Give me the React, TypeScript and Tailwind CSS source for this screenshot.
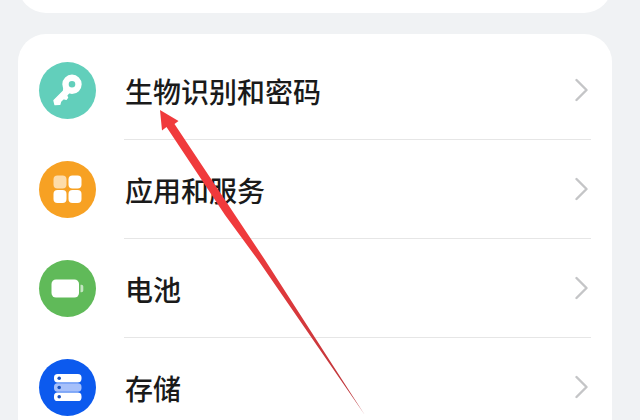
import type { ReactNode } from 'react'

function KeyIcon() {
  return <svg viewBox="0 0 57 57" className="w-full h-full" fill="none" aria-hidden="true">
    <circle cx="33" cy="22.3" r="6.5" stroke="#fff" strokeWidth="6.4" />
    <path d="M25 26L30 30.500L27.500 33.500L28.500 35.500L27.200 37.200L24.500 36.500L21.500 39.500L20.800 42.300L16 42.500L15 38.500L24.500 29Z" fill="#fff" stroke="#fff" strokeWidth="1.4" strokeLinejoin="round" />
  </svg>
}

function AppsIcon() {
  return <svg viewBox="0 0 57 57" className="w-full h-full" fill="#fff" aria-hidden="true">
    <rect x="14.5" y="14.5" width="13" height="13" rx="4" fill="#fddcaa" />
    <rect x="29.5" y="14.5" width="13" height="13" rx="4" />
    <rect x="14.5" y="29" width="13" height="13" rx="4" />
    <rect x="29.5" y="29" width="13" height="13" rx="4" />
  </svg>
}

function BatteryIcon() {
  return <svg viewBox="0 0 57 57" className="w-full h-full" fill="#fff" aria-hidden="true">
    <rect x="12.5" y="19.5" width="27.5" height="18" rx="4.5" />
    <path d="M41.5 24.8h1a1.8 1.8 0 0 1 1.8 1.8v3.8a1.8 1.8 0 0 1-1.8 1.8h-1z" fill="#c5e6c3" />
  </svg>
}

function StorageIcon() {
  return <svg viewBox="0 0 57 57" className="w-full h-full" aria-hidden="true">
    <rect x="15" y="15" width="27.5" height="8.4" rx="3.6" fill="#fff" />
    <rect x="15" y="24.3" width="27.5" height="8.4" rx="3.6" fill="#a6c0fa" />
    <rect x="15" y="33.6" width="27.5" height="8.4" rx="3.6" fill="#fff" />
    <g fill="#174fbd">
      <circle cx="20.2" cy="19.2" r="1.8" />
      <circle cx="20.2" cy="28.5" r="1.8" />
      <circle cx="20.2" cy="37.8" r="1.8" />
    </g>
  </svg>
}

const items: { label: string; color: string; icon: ReactNode }[] = [
  { label: '生物识别和密码', color: 'bg-[#62cfbb]', icon: <KeyIcon /> },
  { label: '应用和服务', color: 'bg-[#f7a123]', icon: <AppsIcon /> },
  { label: '电池', color: 'bg-[#60ba59]', icon: <BatteryIcon /> },
  { label: '存储', color: 'bg-[#0c5aee]', icon: <StorageIcon /> },
]

function SettingsRow({ label, color, icon }: { label: string; color: string; icon: ReactNode }) {
  return <li className="group">
    <button type="button" className="flex w-full h-[99px] items-center gap-7 text-left">
      <span className={`w-[57px] h-[57px] shrink-0 rounded-full ${color}`}>{icon}</span>
      <span className="flex flex-1 h-full items-center justify-between border-b border-[#e6e6e6] group-last:border-transparent">
        <span className="pl-px pt-0.5 text-[28px] leading-10 font-medium text-[#1a1a1a]">{label}</span>
        <svg viewBox="0 0 14 24" className="w-3.5 h-6 mr-0.5" fill="none" stroke="#c4c5c7" strokeWidth="2.4" strokeLinecap="round" strokeLinejoin="round" aria-hidden="true">
          <path d="M1.5 2L11.5 12L1.5 22" />
        </svg>
      </span>
    </button>
  </li>
}

export default function App() {
  return <main className="relative h-screen overflow-hidden bg-[#f0f2f4] pl-[18px] pr-7 font-['Noto_Sans_CJK_SC',sans-serif]">
    <div className="h-[13px] overflow-hidden flex flex-col justify-end">
      <div className="h-14 shrink-0 rounded-[28px] bg-white" />
    </div>
    <ul className="mt-[21px] rounded-[28px] bg-white px-[21px] pt-[7px] pb-2">
      {items.map((item) => <SettingsRow key={item.label} {...item} />)}
    </ul>
    {/* pointer to the first row */}
    <svg viewBox="0 0 206 306" className="absolute left-[159px] top-[109px] w-[206px] h-[306px] pointer-events-none" aria-hidden="true">
      <defs>
        <linearGradient id="arrow" x1="0" y1="0" x2="0" y2="1">
          <stop offset="0.4" stopColor="#f03a3c" />
          <stop offset="1" stopColor="#b8373c" />
        </linearGradient>
      </defs>
      <path d="M1 1L19.500 12L15.500 15L76 106L106 151L205.500 305.500L99 151L66 106L7.500 18L3 21.500Z" fill="url(#arrow)" />
    </svg>
  </main>
}
